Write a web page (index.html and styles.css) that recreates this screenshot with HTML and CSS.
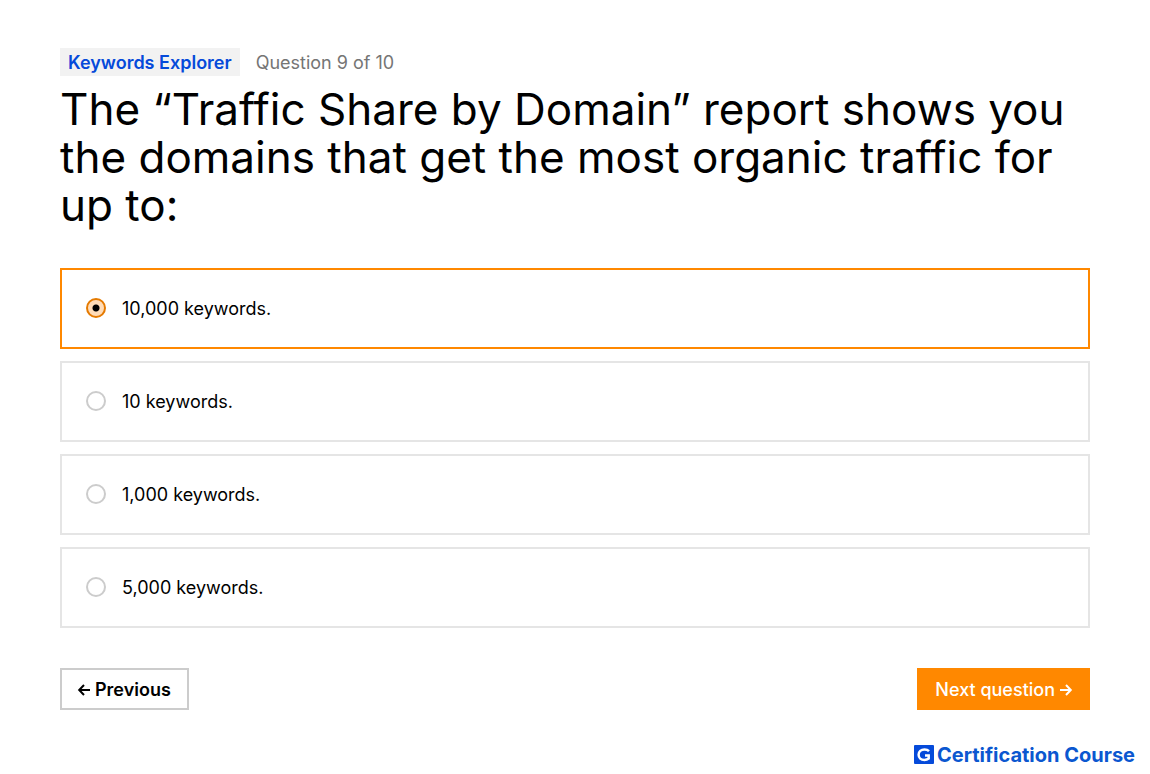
FILE: index.html
```html
<!DOCTYPE html>
<html lang="en">

<head>
    <meta charset="UTF-8">
    <meta name="viewport" content="width=device-width, initial-scale=1.0">
    <title>Certification Course</title>
    <link rel="stylesheet" href="styles.css">
</head>

<body>
    <form class="quiz">
        <div class="meta">
            <span class="tag">Keywords Explorer</span>
            <span class="progress">Question 9 of 10</span>
        </div>
        <h1 class="question" id="question">The “Traffic Share by Domain” report shows you the domains that get the most organic traffic for up to:</h1>

        <div class="answers" role="radiogroup" aria-labelledby="question">
            <label class="answer">
                <input type="radio" name="answer" value="10000" checked>
                <span>10,000 keywords.</span>
            </label>
            <label class="answer">
                <input type="radio" name="answer" value="10">
                <span>10 keywords.</span>
            </label>
            <label class="answer">
                <input type="radio" name="answer" value="1000">
                <span>1,000 keywords.</span>
            </label>
            <label class="answer">
                <input type="radio" name="answer" value="5000">
                <span>5,000 keywords.</span>
            </label>
        </div>

        <div class="buttons">
            <button type="button" class="btn btn-prev">
                <svg class="arrow" viewBox="0 0 12 12" aria-hidden="true">
                    <path d="M12 7H1.5M6 2L1.2 7L6 12" />
                </svg>
                Previous
            </button>
            <button type="submit" class="btn btn-next">
                Next question
                <svg class="arrow" viewBox="0 0 12 12" aria-hidden="true">
                    <path d="M0 7h10.5M6 2l4.8 5L6 12" />
                </svg>
            </button>
        </div>
    </form>

    <footer class="brand">
        <svg class="logo" viewBox="0 0 20 20" aria-hidden="true">
            <rect width="20" height="19" rx="1" />
            <path d="M15 6.2C13.9 5 12.4 4.4 10.5 4.4C7 4.4 4.6 6.600 4.600 9.700s2.400 5.200 5.800 5.200c1.600 0 3.100-.4 4.300-1.300V10.500H11" />
        </svg>
        <span>Certification Course</span>
    </footer>
</body>

</html>
```

FILE: styles.css
```css
* {
    box-sizing: border-box;
}

body {
    margin: 0;
    background: #fff;
    color: #000;
    font-family: Inter, "Liberation Sans", sans-serif;
}

.quiz {
    padding: 48px 60px 0;
}

.meta {
    display: flex;
    align-items: center;
    gap: 16px;
    font-size: 18px;
    line-height: 26px;
}

.meta span {
    padding-top: 2px;
}

.meta .tag {
    padding: 2px 8px 0;
    background: #f2f2f2;
    color: #054ada;
    font-weight: 600;
}

.progress {
    color: #757575;
}

.question {
    margin: 9px 0 39px;
    font-size: 44px;
    font-weight: 400;
    line-height: 48px;
}

.answers {
    display: flex;
    flex-direction: column;
    gap: 12px;
}

.answer {
    display: flex;
    align-items: flex-start;
    gap: 16px;
    padding: 26px 24px;
    border: 2px solid #e5e5e5;
    font-size: 18px;
    line-height: 25px;
    cursor: pointer;
}

.answer:has(input:checked) {
    border-color: #ff8800;
}

.answer input {
    appearance: none;
    width: 20px;
    height: 20px;
    margin: 2px 0;
    border: 2px solid #ccc;
    border-radius: 50%;
    background: #fff;
}

.answer input:checked {
    border-color: #e57a00;
    background: radial-gradient(circle, #000 3px, #ffdcb8 4px);
}

.buttons {
    display: flex;
    justify-content: space-between;
    margin-top: 40px;
}

.btn {
    display: flex;
    align-items: center;
    gap: 5px;
    height: 42px;
    padding: 0 16px;
    border: 2px solid #ccc;
    background: #fff;
    color: #000;
    font-family: inherit;
    font-size: 18px;
    font-weight: 600;
    cursor: pointer;
}

.btn-next {
    border-color: #ff8800;
    background: #ff8800;
    color: #fff;
    font-weight: 500;
}

.arrow {
    width: 12px;
    height: 12px;
    overflow: visible;
    fill: none;
    stroke: currentColor;
    stroke-width: 2;
}

.brand {
    display: flex;
    align-items: center;
    justify-content: flex-end;
    gap: 3px;
    padding: 33px 15px 0;
    color: #0b57d0;
    font-size: 20px;
    font-weight: 700;
    line-height: 24px;
}

.logo {
    width: 20px;
    height: 20px;
    fill: #054ada;
}

.logo path {
    fill: none;
    stroke: #fff;
    stroke-width: 2.5;
}
```
